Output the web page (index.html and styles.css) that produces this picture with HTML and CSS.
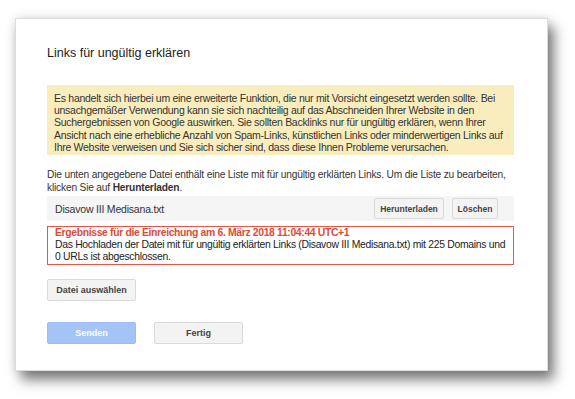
FILE: index.html
```html
<!DOCTYPE html>
<html lang="de">
<head>
<meta charset="utf-8">
<title>Links für ungültig erklären</title>
<link rel="stylesheet" href="styles.css">
</head>
<body>
<div class="dialog">
  <h1 class="title">Links für ungültig erklären</h1>
  <div class="warning">Es handelt sich hierbei um eine erweiterte Funktion, die nur mit Vorsicht eingesetzt werden sollte. Bei unsachgemäßer Verwendung kann sie sich nachteilig auf das Abschneiden Ihrer Website in den Suchergebnissen von Google auswirken. Sie sollten Backlinks nur für ungültig erklären, wenn Ihrer Ansicht nach eine erhebliche Anzahl von Spam-Links, künstlichen Links oder minderwertigen Links auf Ihre Website verweisen und Sie sich sicher sind, dass diese Ihnen Probleme verursachen.</div>
  <p class="info">Die unten angegebene Datei enthält eine Liste mit für ungültig erklärten Links. Um die Liste zu bearbeiten, klicken Sie auf <b>Herunterladen</b>.</p>
  <div class="file-row">
    <span class="file-name">Disavow III Medisana.txt</span>
    <div class="file-actions">
      <button class="btn btn-small w-download">Herunterladen</button>
      <button class="btn btn-small w-delete">Löschen</button>
    </div>
  </div>
  <div class="result">
    <div class="result-title">Ergebnisse für die Einreichung am 6. März 2018 11:04:44 UTC+1</div>
    <div class="result-text">Das Hochladen der Datei mit für ungültig erklärten Links (Disavow III Medisana.txt) mit 225 Domains und 0 URLs ist abgeschlossen.</div>
  </div>
  <div class="choose">
    <button class="btn btn-wide">Datei auswählen</button>
  </div>
  <div class="actions">
    <button class="btn btn-wide btn-primary">Senden</button>
    <button class="btn btn-wide">Fertig</button>
  </div>
</div>
</body>
</html>
```
FILE: styles.css
```css
html, body {
  margin: 0;
  padding: 0;
  background: #ffffff;
}
body {
  font-family: "Liberation Sans", Arial, sans-serif;
  color: #222;
  padding: 18px 0 0 15px;
  height: 399px;
  box-sizing: border-box;
}
.dialog {
  box-sizing: border-box;
  width: 533px;
  height: 353px;
  background: #fff;
  border: 1px solid #dcdcdc;
  padding: 26px 33px 0 31px;
  box-shadow: 6px 9px 12px rgba(0,0,0,0.5), 0 0 10px rgba(0,0,0,0.12);
}
.title {
  margin: 0;
  font-size: 12.5px;
  font-weight: normal;
  line-height: 16px;
  color: #222;
}
.warning {
  margin-top: 24px;
  background: #f9edbe;
  padding: 7px 4px 2px 7px;
  font-size: 10.5px;
  letter-spacing: -0.28px;
  line-height: 12.2px;
  color: #333;
}
.info {
  margin: 14px 0 0;
  font-size: 10.2px;
  letter-spacing: -0.18px;
  line-height: 12.5px;
  color: #333;
}
.file-row {
  margin-top: 2px;
  height: 25px;
  background: #f5f5f5;
  display: flex;
  align-items: center;
  justify-content: space-between;
  padding: 0 16px 0 8px;
}
.file-name {
  font-size: 10.5px;
  letter-spacing: -0.2px;
  color: #333;
}
.file-actions {
  display: flex;
  gap: 8px;
}
.btn {
  font-family: "Liberation Sans", Arial, sans-serif;
  font-size: 8.5px;
  font-weight: bold;
  color: #444;
  background: #f3f3f3;
  border: 1px solid #dadada;
  border-radius: 2px;
  padding: 0;
  cursor: pointer;
}
.btn-small {
  height: 21px;
}
.w-download { width: 70px; }
.w-delete { width: 46px; }
.result {
  margin-top: 5px;
  border: 1px solid #e4574a;
  padding: 0 3px 0 7px;
  font-size: 10.4px;
  letter-spacing: -0.3px;
  line-height: 12.2px;
  color: #222;
}
.result-title {
  color: #dd4b39;
  font-weight: bold;
  letter-spacing: -0.35px;
}
.choose {
  margin-top: 14px;
}
.btn-wide {
  width: 89px;
  height: 22px;
  font-size: 9px;
}
.actions {
  margin-top: 21px;
  display: flex;
  gap: 18px;
}
.btn-primary {
  background: #a4c4f8;
  border-color: #9bbdf4;
  color: #fff;
}
```
